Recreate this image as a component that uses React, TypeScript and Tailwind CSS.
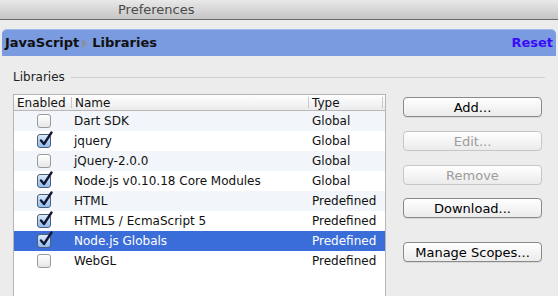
import React from "react";

const rows = [
  { name: "Dart SDK", type: "Global", on: false },
  { name: "jquery", type: "Global", on: true },
  { name: "jQuery-2.0.0", type: "Global", on: false },
  { name: "Node.js v0.10.18 Core Modules", type: "Global", on: true },
  { name: "HTML", type: "Predefined", on: true },
  { name: "HTML5 / EcmaScript 5", type: "Predefined", on: true },
  { name: "Node.js Globals", type: "Predefined", on: true, sel: true },
  { name: "WebGL", type: "Predefined", on: false },
];

function Check({ on }: { on: boolean }) {
  if (!on)
    return (
      <div className="w-[14px] h-[14px] rounded-[3px] border border-[#9a9a9a] bg-gradient-to-b from-[#ffffff] to-[#e6e6e6]" />
    );
  return (
    <div className="relative w-[14px] h-[14px] rounded-[3px] border border-[#4f5f7a] bg-gradient-to-b from-[#dcecfc] to-[#8ebbee]">
      <svg className="absolute left-[0px] top-[-4px]" width="16" height="17" viewBox="0 0 16 17">
        <path d="M3 9.5 L6 13 L13.5 1.5" fill="none" stroke="#141830" strokeWidth="2.4" strokeLinecap="round" strokeLinejoin="round" />
      </svg>
    </div>
  );
}

function Btn({ label, disabled, className = "" }: { label: string; disabled?: boolean; className?: string }) {
  return (
    <div
      className={
        "w-[139px] h-[20px] rounded-[4px] flex items-center justify-center text-[13px] leading-none bg-gradient-to-b from-[#ffffff] to-[#ebebeb] " +
        (disabled ? "border border-[#c6c6c6] text-[#9c9c9c]" : "border border-[#8a8a8a] text-black shadow-[0_1px_0_rgba(0,0,0,0.08)]") +
        " " +
        className
      }
    >
      {label}
    </div>
  );
}

export default function App() {
  return (
    <div
      className="w-[558px] h-[296px] overflow-hidden bg-[#ececec] flex flex-col"
      style={{ fontFamily: '"Lucida Grande", "DejaVu Sans", sans-serif' }}
    >
      <div className="h-[20px] shrink-0 bg-gradient-to-b from-[#e9e9e9] to-[#c5c5c5] border-b border-[#6b6b6b] flex items-center pl-[118px] text-[13px] text-[#4a4a4a]">
        Preferences
      </div>
      <div className="h-[9px] shrink-0" />
      <div className="mx-[2px] h-[27px] shrink-0 rounded-t-[5px] bg-[#7a9be0] border-t border-[#9fb8ec] flex items-center justify-between pl-[3px] pr-[3px]">
        <div className="flex items-center text-[13px] font-bold text-[#111]">
          <span>JavaScript</span>
          <svg className="ml-[3px] mr-[5px]" width="5" height="9" viewBox="0 0 5 9">
            <path d="M0 0 L5 4.5 L0 9 Z" fill="#8b919c" />
          </svg>
          <span>Libraries</span>
        </div>
        <span className="text-[13px] font-bold text-[#3a0cf6]">Reset</span>
      </div>
      <div className="flex items-center mt-[13px] pl-[13px] pr-[13px] h-[16px] shrink-0">
        <span className="text-[12px] text-[#222]">Libraries</span>
        <div className="flex-1 ml-[6px] h-[1px] bg-[#cfcfcf]" />
      </div>
      <div className="flex mt-[9px] pl-[13px] flex-1 min-h-0">
        <div className="w-[373px] bg-white border border-[#b5b5b5] border-b-0 flex flex-col">
          <div className="h-[16px] shrink-0 flex text-[12px] text-[#111] bg-gradient-to-b from-[#ffffff] to-[#ebebeb] border-b border-[#b8b8b8]">
            <div className="w-[58px] pl-[3px] flex items-center border-r border-[#c8c8c8] my-[2px]">Enabled</div>
            <div className="w-[237px] pl-[3px] flex items-center border-r border-[#c8c8c8] my-[2px]">Name</div>
            <div className="w-[74px] pl-[3px] flex items-center border-r border-[#c8c8c8] my-[2px]">Type</div>
          </div>
          {rows.map((r, i) => (
            <div
              key={r.name}
              className={
                "h-[20px] shrink-0 flex items-center text-[12px] " +
                (r.sel ? "bg-[#3b6dd9] text-white" : i % 2 === 0 ? "bg-[#f2f5f9] text-[#111]" : "bg-white text-[#111]")
              }
            >
              <div className="w-[59px] flex justify-center">
                <Check on={r.on} />
              </div>
              <div className="w-[237px] pl-[1px]">{r.name}</div>
              <div className="pl-[2px]">{r.type}</div>
            </div>
          ))}
        </div>
        <div className="flex flex-col ml-[17px] pt-[3px]">
          <Btn label="Add..." />
          <Btn label="Edit..." disabled className="mt-[14px]" />
          <Btn label="Remove" disabled className="mt-[14px]" />
          <Btn label="Download..." className="mt-[13px]" />
          <Btn label="Manage Scopes..." className="mt-[24px]" />
        </div>
      </div>
    </div>
  );
}
